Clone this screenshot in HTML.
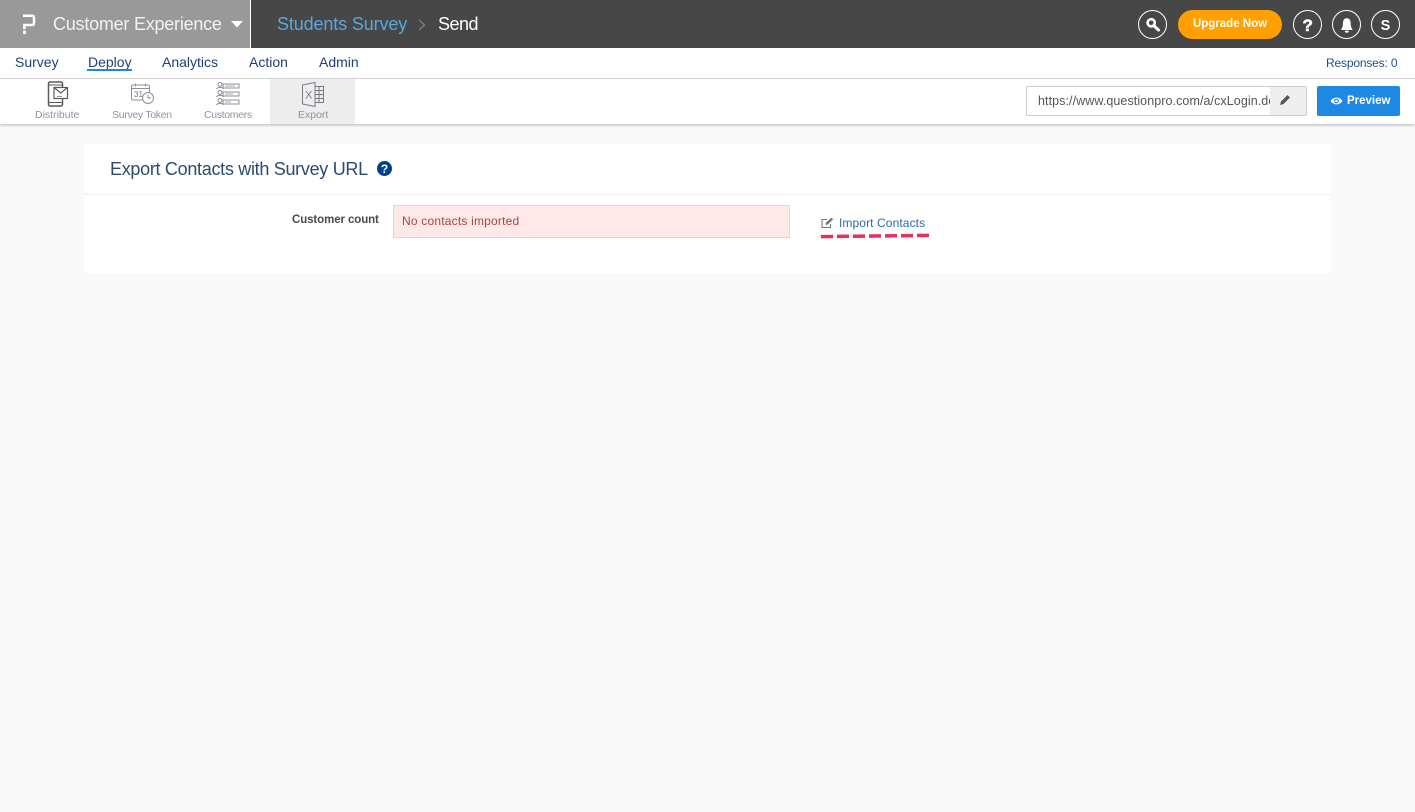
<!DOCTYPE html>
<html><head><meta charset="utf-8"><title>Export Contacts</title>
<style>
html,body{margin:0;padding:0;width:1415px;height:812px;overflow:hidden;background:#f9f9f9;font-family:"Liberation Sans",sans-serif}
.a{position:absolute;white-space:nowrap;line-height:1}
svg{position:absolute;display:block;overflow:visible}
</style></head><body>
<div class="a" style="left:0;top:0;width:1415px;height:48px;background:#474747"></div>
<div class="a" style="left:0;top:0;width:250px;height:48px;background:#999;border-right:1px solid #fff"></div>
<svg style="left:22px;top:14px" width="14" height="20" viewBox="0 0 14 20"><path d="M1 1.700H10Q12 1.700 12 4V8.500Q12 11 10 11H2.400V15.300" fill="none" stroke="#fff" stroke-width="2.500"/><rect x="1" y="16.700" width="3" height="3.300" fill="#fff"/></svg>
<div class="a" style="left:53px;top:15px;font-size:18px;color:#f2f2f2;letter-spacing:-.23px">Customer Experience</div>
<svg style="left:231px;top:21px" width="12" height="7"><path d="M0 0H12L6 6.500Z" fill="#fff"/></svg>
<div class="a" style="left:277px;top:15px;font-size:18px;color:#5ba8dc;letter-spacing:-.13px">Students Survey</div>
<svg style="left:418px;top:19px" width="8" height="12"><path d="M1 1L6.500 6L1 11" fill="none" stroke="#7d7d7d" stroke-width="1.400"/></svg>
<div class="a" style="left:438px;top:15px;font-size:18px;color:#fff;letter-spacing:-.5px">Send</div>

<svg style="left:1138px;top:10px" width="29" height="29" viewBox="0 0 29 29"><circle cx="14.500" cy="14.500" r="14" fill="none" stroke="#fff" stroke-width="1"/><circle cx="13.200" cy="12.800" r="3.600" fill="none" stroke="#fff" stroke-width="2.600"/><path d="M16.200 16L20.500 20" stroke="#fff" stroke-width="3" stroke-linecap="round"/></svg>
<div class="a" style="left:1178px;top:10px;width:104px;height:29px;border-radius:15px;background:#ffa000;color:#fff;font-size:11.500px;font-weight:bold;line-height:29px;text-align:center">Upgrade Now</div>
<svg style="left:1293px;top:10px" width="29" height="29" viewBox="0 0 29 29"><circle cx="14.500" cy="14.500" r="14" fill="none" stroke="#fff"/><text x="14.700" y="21" font-size="17" font-weight="bold" fill="#fff" stroke="#fff" stroke-width=".6" text-anchor="middle" font-family="Liberation Sans">?</text></svg>
<svg style="left:1332px;top:10px" width="29" height="29" viewBox="0 0 29 29"><circle cx="14.500" cy="14.500" r="14" fill="none" stroke="#fff"/><path d="M14.800 8.300C11.800 8.300 11 10.800 11 13.300C11 16.800 10 18.300 9 20H20.700C19.700 18.300 18.700 16.800 18.700 13.300C18.700 10.800 17.800 8.300 14.800 8.300Z" fill="#fff"/><path d="M12.800 20.800A2 2 0 0 0 16.800 20.800Z" fill="#fff"/></svg>
<svg style="left:1371px;top:10px" width="29" height="29" viewBox="0 0 29 29"><circle cx="14.500" cy="14.500" r="14" fill="none" stroke="#fff"/><text x="14.500" y="20" font-size="14.500" font-weight="bold" fill="#fff" text-anchor="middle" font-family="Liberation Sans">S</text></svg>

<div class="a" style="left:0;top:48px;width:1415px;height:30px;background:#fff;border-bottom:1px solid #ddd"></div>
<div class="a" style="left:15px;top:55px;font-size:14px;color:#1f3f77">Survey</div>
<div class="a" style="left:88px;top:55px;font-size:14px;color:#1f3f77">Deploy</div>
<div class="a" style="left:87px;top:69px;width:45px;height:2px;background:#1e88d2"></div>
<div class="a" style="left:162px;top:55px;font-size:14px;color:#1f3f77">Analytics</div>
<div class="a" style="left:249px;top:55px;font-size:14px;color:#1f3f77">Action</div>
<div class="a" style="left:319px;top:55px;font-size:14px;color:#1f3f77">Admin</div>
<div class="a" style="left:1326px;top:56.500px;font-size:12px;color:#1f4f87;letter-spacing:-.17px">Responses: 0</div>

<div class="a" style="left:0;top:79px;width:1415px;height:45px;background:#fff;box-shadow:0 1px 3px rgba(0,0,0,.28)"></div>
<div class="a" style="left:270px;top:79px;width:85px;height:45px;background:#ededed"></div>

<svg style="left:47px;top:81px" width="22" height="26" viewBox="0 0 22 26" fill="none" stroke="#5a5a5a" stroke-width="1.500"><rect x="1.500" y="1" width="14" height="24" rx="1.500"/><path d="M1.500 4H15.500M1.500 21.500H15.500" stroke-width="1"/><rect x="7" y="6.500" width="13.500" height="11" fill="#fff" stroke-width="1.200"/><path d="M7 6.500L13.700 12L20.500 6.500" stroke-width="1.200"/><path d="M10 15.500H15" stroke="#999" stroke-width="1"/></svg>
<div class="a" style="left:35px;top:110px;font-size:10.500px;color:#8f93a3">Distribute</div>

<svg style="left:131px;top:83px" width="24" height="22" viewBox="0 0 24 22" fill="none" stroke="#8a8f9c" stroke-width="1"><rect x=".5" y="2" width="18" height="15" rx="1.500"/><path d="M.5 5.500H18.500M4.500 .5V3.500M14.500 .5V3.500"/><text x="3" y="14" font-size="8" fill="#777" stroke="none" font-family="Liberation Sans">31</text><circle cx="17" cy="15" r="5.500" fill="#fff"/><path d="M17 11.500V15H20"/></svg>
<div class="a" style="left:112px;top:110px;font-size:10.500px;color:#8f93a3;letter-spacing:-.3px">Survey Token</div>

<svg style="left:215px;top:81px" width="25" height="25" viewBox="0 0 25 25" fill="none" stroke="#8a8f9c" stroke-width="1"><circle cx="5" cy="3.500" r="2"/><path d="M1.500 8C2 6 8 6 8.500 8"/><rect x="8" y="3" width="16" height="4"/><circle cx="5" cy="11.500" r="2"/><path d="M1.500 16C2 14 8 14 8.500 16"/><rect x="8" y="11" width="16" height="4"/><circle cx="5" cy="19.500" r="2"/><path d="M1.500 24C2 22 8 22 8.500 24"/><rect x="8" y="19" width="16" height="4"/><path d="M10 5H20M10 13H18M10 21H16" stroke="#aaa"/></svg>
<div class="a" style="left:204px;top:110px;font-size:10.500px;color:#8f93a3;letter-spacing:-.33px">Customers</div>

<svg style="left:302px;top:82px" width="22" height="25" viewBox="0 0 22 25" fill="none" stroke="#777b88" stroke-width="1"><path d="M.5 3L13 .5V24.500L.5 22Z"/><path d="M13 4.500H21.500V20.500H13M13 8.500H21.500M13 12.500H21.500M13 16.500H21.500M17 4.500V20.500"/><text x="3" y="16.500" font-size="11" fill="#777b88" stroke="none" font-family="Liberation Sans">X</text></svg>
<div class="a" style="left:298px;top:110px;font-size:10.500px;color:#8f93a3">Export</div>

<div class="a" style="left:1026px;top:86px;width:279px;height:28px;background:#fff;border:1px solid #ccc;border-radius:2px;overflow:hidden">
<div class="a" style="left:11px;top:8px;width:233px;overflow:hidden;font-size:12.500px;color:#555;letter-spacing:.08px">https://www.questionpro.com/a/cxLogin.do</div>
<div class="a" style="left:243px;top:0;width:36px;height:28px;background:#eee"></div>
</div>
<svg style="left:1280px;top:94px" width="11" height="11" viewBox="0 0 11 11"><path d="M0 11L1 7.500L7.500 1L10 3.500L3.500 10Z" fill="#555"/></svg>
<div class="a" style="left:1317px;top:86px;width:83px;height:30px;border-radius:2px;background:#1e88e5"></div>
<svg style="left:1330px;top:96px" width="13" height="10" viewBox="0 0 13 10"><path d="M.5 5C3.500 .5 9.500 .5 12.500 5C9.500 9.500 3.500 9.500 .5 5Z" fill="#fff"/><circle cx="6.500" cy="5" r="2.400" fill="#1e88e5"/><circle cx="6.500" cy="5" r="1.300" fill="#fff"/></svg>
<div class="a" style="left:1347px;top:96px;font-size:11.500px;font-weight:bold;color:#fff">Preview</div>

<div class="a" style="left:84px;top:144px;width:1247px;height:129px;background:#fff"></div>
<div class="a" style="left:84px;top:194px;width:1247px;height:1px;background:#eeeef3"></div>
<div class="a" style="left:110px;top:160px;font-size:18px;color:#2c4a6e;letter-spacing:-.3px">Export Contacts with Survey URL</div>
<svg style="left:377px;top:161px" width="15" height="15" viewBox="0 0 15 15"><circle cx="7.500" cy="7.500" r="7.500" fill="#003f8c"/><text x="7.500" y="12" font-size="12" font-weight="bold" fill="#fff" text-anchor="middle" font-family="Liberation Sans">?</text></svg>
<div class="a" style="left:292px;top:215px;font-size:11.500px;font-weight:bold;color:#4a4a4a;letter-spacing:-.1px">Customer count</div>
<div class="a" style="left:393px;top:205px;width:395px;height:31px;background:#fee8e8;border:1px solid #f0cfd3"></div>
<div class="a" style="left:402px;top:215px;font-size:12px;color:#a94442;letter-spacing:.2px">No contacts imported</div>
<svg style="left:821px;top:217px" width="13" height="12" viewBox="0 0 13 12" fill="none" stroke="#777" stroke-width="1.100"><path d="M9.500 7V10.500H1V2.500H6"/><path d="M4.500 8L5 5.500L10.500 .7L12.200 2.300L6.800 7.500Z" fill="#777" stroke="none"/></svg>
<div class="a" style="left:839px;top:217px;font-size:12px;color:#2a6aa8;letter-spacing:.1px">Import Contacts</div>
<svg style="left:821px;top:233px" width="109" height="5"><path d="M0 3H109" stroke="#e8305a" stroke-width="3.500" stroke-dasharray="12 4" transform="rotate(-.6 54 3)"/></svg>
</body></html>
